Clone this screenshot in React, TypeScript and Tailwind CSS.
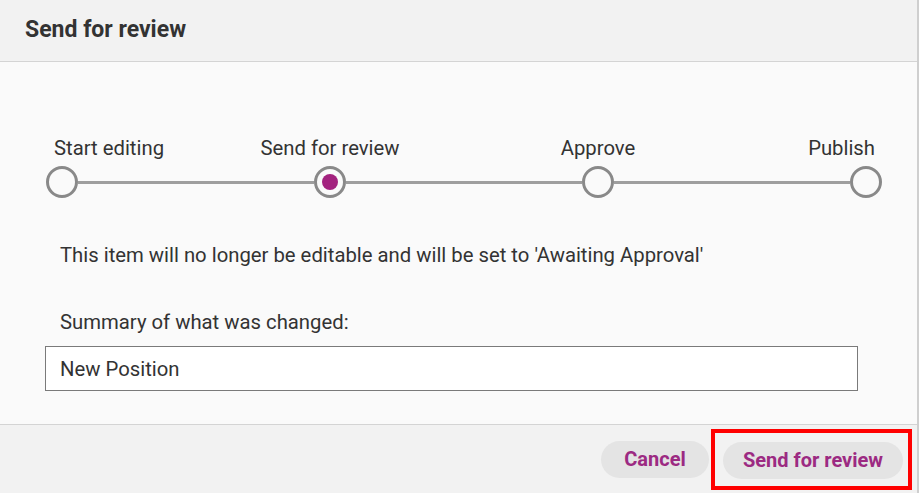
const steps = ["Start editing", "Send for review", "Approve", "Publish"];

function StepCircle({ active }: { active?: boolean }) {
  return (
    <div className="flex h-8 w-8 shrink-0 items-center justify-center rounded-full border-[3px] border-[#898989] bg-[#fafafa]">
      {active && <div className="h-4 w-4 rounded-full bg-[#a3227f]" />}
    </div>
  );
}

function Timeline() {
  return (
    <div className="mx-[46px] w-[836px]">
      <div className="flex text-[20.3px] leading-6 text-[#333]">
        <div className="w-[184px] pl-2 text-left">{steps[0]}</div>
        <div className="w-[200px] text-center">{steps[1]}</div>
        <div className="w-[68px]" />
        <div className="w-[200px] text-center">{steps[2]}</div>
        <div className="flex-1 pr-[7px] text-right">{steps[3]}</div>
      </div>
      <div className="mt-[6px] flex items-center">
        <StepCircle />
        <div className="h-[3px] flex-1 bg-[#9e9e9e]" />
        <StepCircle active />
        <div className="h-[3px] flex-1 bg-[#9e9e9e]" />
        <StepCircle />
        <div className="h-[3px] flex-1 bg-[#9e9e9e]" />
        <StepCircle />
      </div>
    </div>
  );
}

export default function App() {
  return (
    <div className="flex h-[493px] w-[919px] flex-col overflow-hidden border-r-2 border-[#cfcfcf] bg-[#fafafa] font-['Roboto',sans-serif] text-[#333]">
      <header className="h-[62px] shrink-0 border-b border-[#d4d4d4] bg-[#f2f2f2] px-[25px] pt-[16px]">
        <h1 className="text-[23px] font-bold leading-7 text-[#333]">Send for review</h1>
      </header>

      <main className="flex-1 pt-[74px]">
        <Timeline />
        <p className="mt-[45px] pl-[60px] text-[20.3px] leading-6">
          This item will no longer be editable and will be set to 'Awaiting Approval'
        </p>
        <label className="mt-[43px] block pl-[60px] text-[20.3px] leading-6">
          Summary of what was changed:
        </label>
        <input
          className="ml-[45px] mt-[12px] h-[45px] w-[813px] border border-[#7a7a7a] bg-white px-[14px] text-[20.3px] leading-6 text-[#333] outline-none"
          defaultValue="New Position"
        />
      </main>

      <footer className="flex h-[69px] shrink-0 items-center justify-end border-t border-[#d4d4d4] bg-[#f2f2f2] pr-[5px]">
        <button className="h-[37px] w-[108px] rounded-full bg-[#e4e4e4] text-[20px] font-bold text-[#9c2a82]">
          Cancel
        </button>
        <div className="ml-[2px] border-4 border-[#ff0000] pb-[7px] pl-2 pr-[5px] pt-[9px]">
          <button className="h-[37px] w-[180px] rounded-full bg-[#e4e4e4] text-[20px] font-bold text-[#9c2a82]">
            Send for review
          </button>
        </div>
      </footer>
    </div>
  );
}
